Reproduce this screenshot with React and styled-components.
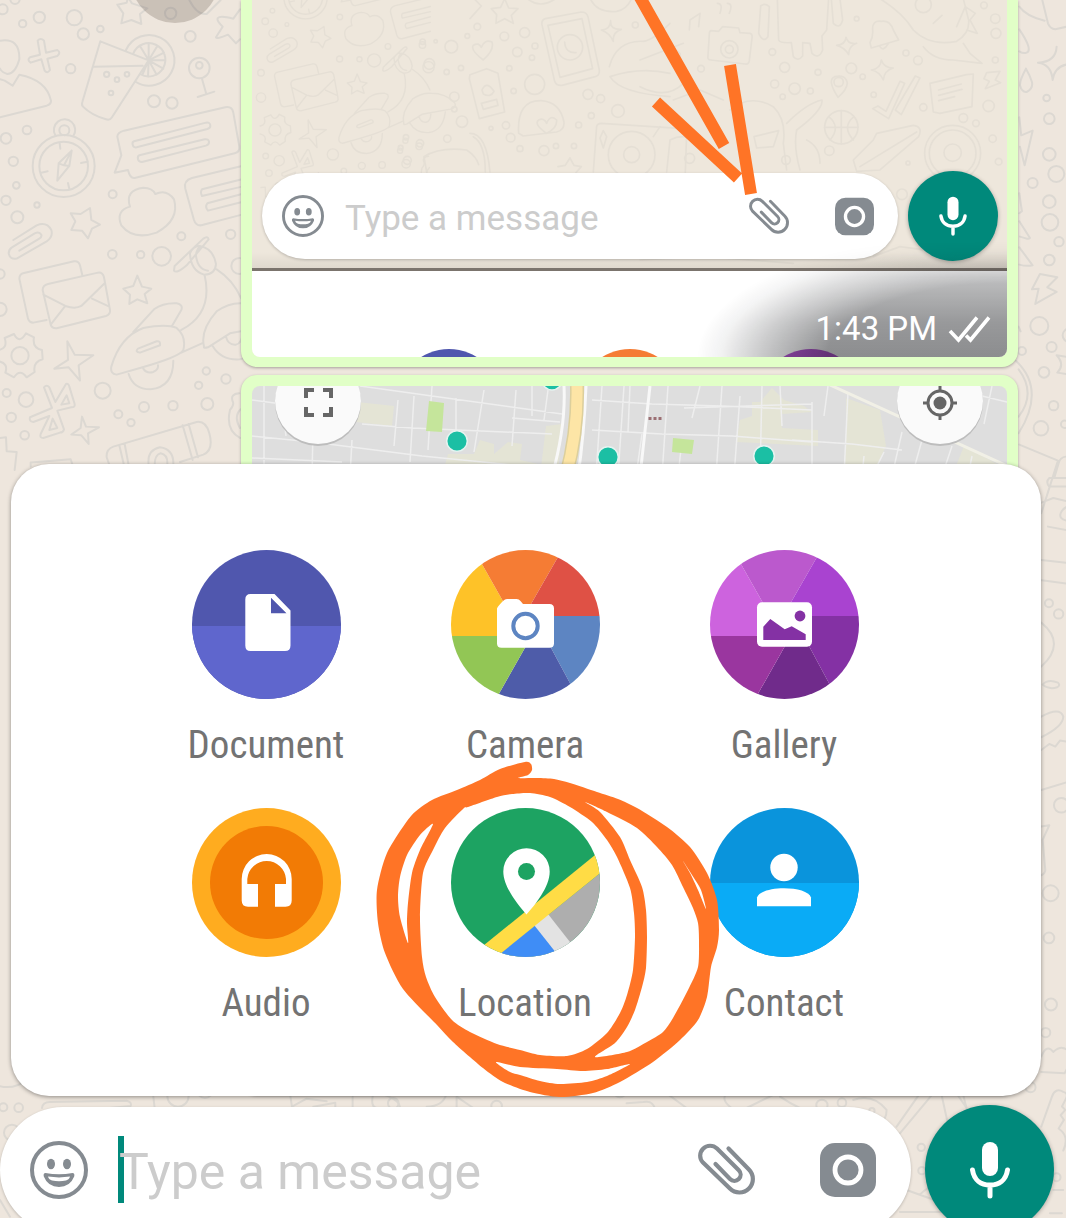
import styled, { createGlobalStyle } from 'styled-components';

const GlobalStyle = createGlobalStyle`
  * {
    box-sizing: border-box;
  }

  body {
    margin: 0;
    background: #eee6dd;
    font-family: Roboto, 'Liberation Sans', sans-serif;
  }
`;

const PageStyled = styled.main`
  position: relative;
  display: flex;
  flex-direction: column;
  height: 100vh;
  overflow: hidden;
  background: #eee6dd;
`;

const WallpaperStyled = styled.svg`
  position: absolute;
  top: 0;
  left: 0;
  width: 100%;
  height: 100%;
  fill: none;
  stroke: ${({ $faint }) => ($faint ? '#e5dfd5' : '#dcd8d2')};
  stroke-width: 6;
  stroke-linecap: round;
  stroke-linejoin: round;
`;

const ChatStyled = styled.div`
  position: relative;
  flex: 1;
  min-height: 0;
  display: flex;
  flex-direction: column;
  gap: 8px;
  padding: 0 48px 10px 241px;
`;

const BubbleStyled = styled.div`
  position: relative;
  padding: ${({ $continued }) => ($continued ? '0 11px 10px' : '11px')};
  border-radius: ${({ $continued }) => ($continued ? '0 0 16px 16px' : '16px')};
  background: #e1ffc7;
  box-shadow: 0 1px 3px rgba(0, 0, 0, 0.3);
  ${({ $grow }) => $grow && 'flex: 1; min-height: 0;'}
`;

const ForwardButton = styled.button`
  position: absolute;
  top: -65px;
  left: -110px;
  width: 88px;
  height: 88px;
  border: 0;
  border-radius: 50%;
  background: rgba(60, 45, 35, 0.2);
`;

const PhotoStyled = styled.div`
  position: relative;
  overflow: hidden;
  border-radius: 0 0 8px 8px;
  background: #eee7dc;

  .photo__chat {
    position: relative;
    padding: 171px 9px 7px 10px;
    border-bottom: 3px solid #7b746d;
    background: linear-gradient(#0000 94%, #00000010);
  }

  .photo__sheet {
    position: relative;
    display: flex;
    justify-content: center;
    gap: 77px;
    height: 86px;
    padding-top: 78px;
    overflow: hidden;
    background: #fff;
  }

  .photo__arrow {
    position: absolute;
    top: 0;
    left: 0;
  }
`;

const PhotoDot = styled.span`
  flex: none;
  width: 104px;
  height: 104px;
  border-radius: 50%;
  background: ${({ $color }) => $color};
`;

const TimeStyled = styled.div`
  position: absolute;
  right: 0;
  bottom: 0;
  width: 310px;
  height: 116px;
  display: flex;
  align-items: flex-end;
  justify-content: flex-end;
  gap: 11px;
  padding: 0 16px 8px 0;
  color: #fff;
  font-size: 33px;
  line-height: 40px;

  &::before {
    content: '';
    position: absolute;
    inset: 0;
    background: linear-gradient(
      to top,
      rgba(10, 12, 16, 0.47),
      rgba(10, 12, 16, 0.42) 30%,
      rgba(10, 12, 16, 0.26) 70%,
      rgba(10, 12, 16, 0)
    );
    mask-image: radial-gradient(
      ellipse 100% 110% at 100% 100%,
      #000 58%,
      rgba(0, 0, 0, 0.5) 78%,
      rgba(0, 0, 0, 0.12) 92%,
      transparent 100%
    );
  }

  time,
  svg {
    position: relative;
  }

  svg {
    margin-bottom: 6px;
  }
`;

const MapStyled = styled.div`
  height: 100%;
  overflow: hidden;
  border-radius: 8px;
  background: #dedede;
`;

const ComposerStyled = styled.form`
  position: relative;
  display: flex;
  align-items: center;
  gap: ${({ $small }) => ($small ? '10px' : '14px')};
  ${({ $small }) => !$small && 'margin-bottom: -16px; padding-right: 12px;'}

  .composer__pill {
    flex: 1;
    min-width: 0;
    display: flex;
    align-items: center;
    height: ${({ $small }) => ($small ? '86px' : '126px')};
    padding: ${({ $small }) => ($small ? '0 24px 0 20px' : '0 35px 0 30px')};
    border-radius: 64px;
    background: #fff;
    box-shadow: 0 1px 3px rgba(0, 0, 0, 0.22);
  }

  .composer__field {
    position: relative;
    flex: 1;
    min-width: 0;
    margin-left: ${({ $small }) => ($small ? '21px' : '30px')};
  }

  .composer__caret {
    position: absolute;
    top: 0;
    left: 0;
    width: 6px;
    height: 67px;
    background: #00897b;
  }

  input {
    position: relative;
    display: block;
    width: 100%;
    height: ${({ $small }) => ($small ? '44px' : '67px')};
    padding: ${({ $small }) => ($small ? '4px 0 0' : '4px 0 0 1px')};
    border: 0;
    outline: 0;
    background: transparent;
    font-family: inherit;
    font-size: ${({ $small }) => ($small ? '35px' : '50px')};
  }

  input::placeholder {
    color: #ccc;
    opacity: 1;
  }
`;

const IconButton = styled.button`
  flex: none;
  display: flex;
  padding: 0;
  border: 0;
  background: none;
  margin-left: ${({ $gap }) => $gap || 0}px;
`;

const MicButton = styled.button`
  flex: none;
  display: flex;
  align-items: center;
  justify-content: center;
  width: ${({ $small }) => ($small ? '90px' : '129px')};
  height: ${({ $small }) => ($small ? '90px' : '129px')};
  padding: 0;
  border: 0;
  border-radius: 50%;
  background: #00897b;
  box-shadow: 0 1px 4px rgba(0, 0, 0, 0.3);
`;

const DockStyled = styled.div`
  position: relative;
`;

const SheetStyled = styled.section`
  position: absolute;
  z-index: 1;
  left: 11px;
  right: 25px;
  bottom: calc(100% + 9px);
  height: 632px;
  padding: 86px 2px 0 0;
  border-radius: 38px;
  background: #fff;
  box-shadow: 0 1px 4px rgba(0, 0, 0, 0.4);

  .sheet__grid {
    display: grid;
    grid-template-columns: repeat(3, 259px);
    grid-auto-rows: 258px;
    justify-content: center;
  }

  .sheet__scribble {
    position: absolute;
    top: 291px;
    left: calc(50% - 156px);
    pointer-events: none;
  }
`;

const AttachButton = styled.button`
  display: flex;
  flex-direction: column;
  align-items: center;
  gap: 22px;
  padding: 0;
  border: 0;
  background: none;
  color: #737373;
  font-family: 'Roboto Condensed', 'Liberation Sans Narrow', Roboto, sans-serif;
  font-size: 39px;
  line-height: 48px;

  svg {
    display: block;
    border-radius: 50%;
  }
`;

const Circles = ({ items }) =>
  items.map(([x, y, r]) => <circle key={`${x}-${y}-${r}`} cx={x} cy={y} r={r} />);

const leftBubbles = [
  [8, 28, 15], [45, -2, 14], [68, 71, 11], [118, 52, 17], [223, 53, 23], [250, 102, 17],
  [301, 87, 10], [512, 40, 17], [571, 109, 16], [212, 206, 14], [462, 304, 18], [516, 309, 17],
  [81, 390, 13], [18, 415, 16], [40, 484, 14], [49, 556, 10], [18, 601, 14], [111, 615, 8],
  [52, 652, 18], [338, 583, 12], [544, 709, 12], [692, 703, 14], [337, 763, 13], [422, 764, 11],
  [485, 769, 28], [0, 822, 14], [0, 928, 20], [308, 1172, 24], [20, 1179, 12], [78, 1199, 22],
  [34, 1252, 14], [74, 1306, 13], [619, 1113, 11], [678, 1137, 14], [596, 1156, 11],
  [432, 1221, 15], [519, 1217, 14], [355, 1243, 12], [393, 1268, 11], [622, 1212, 18], [718, 798, 24],
];

const rightBubbles = [
  [1220, 294, 10], [1228, 356, 16], [1228, 463, 19], [1249, 522, 24], [1178, 549, 15],
  [1228, 605, 19], [1230, 667, 25], [1257, 725, 14], [1228, 780, 16], [1198, 978, 27],
  [1235, 1041, 15], [1146, 1053, 12], [1212, 1117, 16], [1241, 1217, 14], [1203, 1285, 22],
  [1274, 1273, 11], [1288, 1006, 20],
];

const LeftDoodles = () => (
  <g transform="scale(.3333)">
    <Circles items={leftBubbles} />
    {/* drink with a lemon slice */}
    <path d="M301 124L446 181L336 352Q330 362 318 358Q275 346 249 320Q244 315 247 306ZM282 200L428 197M378 150A76 76 0 1 1 408 246M400 160A50 50 0 1 1 420 222M446 181V130M446 181L420 138M446 181L472 138M446 181L492 158M446 181H496M446 181L490 206M446 181L470 224M446 181L444 230M446 181L428 222" />
    <circle cx="320" cy="223" r="8" />
    <circle cx="381" cy="223" r="7" />
    <circle cx="351" cy="239" r="7" />
    <circle cx="333" cy="279" r="7" />
    {/* pin */}
    <circle cx="598" cy="204" r="31" />
    <circle cx="598" cy="196" r="10" />
    <path d="M606 236L619 282M593 291L643 275" />
    {/* stars and crosses */}
    <path d="M384 -8L396 10L442 25L420 42L424 72L394 60L364 70L370 40L352 14L380 8Z" />
    <path d="M720 28L700 56Q660 46 654 54Q648 60 668 80L648 112Q650 118 684 104L708 130L720 118M566 -4Q590 46 620 42L662 0" />
    <path d="M113 122Q122 112 132 122L138 158L172 150Q184 158 172 168L142 176L150 210Q142 222 134 212L124 178L92 188Q80 180 90 172L120 164Z" />
    <path d="M0 122Q60 112 58 178Q46 222 22 222Q6 218 0 206M0 238L14 242L38 257L58 224Q140 240 153 302Q154 312 140 317L0 352" />
    {/* compass */}
    <circle cx="191" cy="498" r="93" />
    <circle cx="191" cy="498" r="73" />
    <circle cx="193" cy="391" r="15" />
    <path d="M166 406A32 32 0 1 1 220 408M179 430L181 446M204 549L208 567M124 518L143 514M243 489L262 485M215 452L208 498L172 542L176 490ZM176 490L192 496L208 498M192 496L215 452" />
    {/* speech notes */}
    <path d="M372 392L676 322Q696 318 700 338L718 440Q720 456 704 460L404 534Q390 536 384 510L344 518L364 466L352 410Q352 398 372 392ZM402 424L618 368Q630 366 631 376Q632 384 622 387L410 442Q400 444 398 434Q396 426 402 424ZM418 466L614 418Q626 416 627 426Q628 434 618 437L426 486Q416 486 414 478Q412 468 418 466Z" />
    <path d="M726 498L576 534Q550 542 556 566L582 660Q588 678 604 676L726 644M726 538L606 568Q600 576 606 588L726 560M726 582L622 610Q614 620 624 632L726 606" />
    <path d="M390 620Q374 570 430 563Q458 564 466 582Q500 566 522 598Q540 660 470 698Q400 722 364 676Q346 632 390 620Z" />
    <path d="M270 624L274 660L300 674L276 686L264 715L246 692L214 690L226 664L212 640L242 642Z" />
    <path d="M40 720L110 676Q140 664 154 690Q160 710 140 724L50 776Q30 780 26 760Q26 748 36 742L104 700Q118 694 124 704Q126 712 118 716L58 752" />
    {/* letters */}
    <path d="M140 960L100 968Q88 968 84 956L58 836Q58 822 72 819L222 784Q236 782 240 796L247 826M144 852L294 818Q308 816 312 832L330 930Q332 944 318 948L170 985Q156 986 152 974L128 870Q128 856 144 852ZM130 884L196 918Q226 928 244 918L314 850M152 974L196 918M328 920L276 896" />
    <path d="M412 827L426 860L454 866L434 882L442 910L412 898L388 912L390 884L370 866L400 858Z" />
    {/* scooter */}
    <path d="M524 798L610 716Q624 706 626 718L560 796Q530 822 522 812ZM570 760Q580 736 600 738Q640 746 648 792Q646 824 612 824Q572 812 570 760ZM588 768Q590 740 606 740M588 768Q594 810 624 812M614 826Q640 940 544 990M650 808Q700 840 724 896M400 996L462 928Q490 908 530 910Q550 914 544 930L516 978M334 1100Q360 1010 430 984Q500 970 530 984Q560 1010 550 1050Q540 1070 420 1104L350 1124Q330 1122 334 1100ZM414 1046L470 1024Q482 1022 480 1036L420 1058Q404 1056 414 1046ZM386 1122Q400 1168 452 1168Q520 1160 520 1082M430 1106Q440 1122 460 1116Q476 1108 474 1096M544 1058L606 1030M612 1040Q600 990 650 934Q690 906 730 910Q790 910 830 950Q840 970 812 978L690 1000L624 1042Q610 1046 612 1040ZM638 1038Q664 1082 720 1078Q780 1070 790 990M678 1010Q684 1036 708 1034Q726 1030 728 1000" />
    {/* gear */}
    <circle cx="60" cy="1067" r="26" />
    <path d="M42 1002Q58 1034 78 1000L102 1012Q96 1044 126 1050L128 1078Q98 1086 104 1116L80 1132Q60 1104 42 1132L16 1118Q26 1090 -4 1084M-4 1050Q24 1046 14 1014L42 1002" />
    <path d="M202 1024L224 1064L280 1066L236 1096L240 1142L206 1102L163 1106L204 1080Z" />
    <path d="M132 1162Q140 1152 148 1162L166 1206L198 1152Q206 1150 208 1160L224 1212Q226 1222 214 1222L172 1232L192 1288Q190 1298 180 1298L130 1314Q118 1314 122 1302L148 1248L100 1266Q86 1264 90 1252L156 1224ZM200 1186L208 1210L184 1214ZM158 1256L172 1284L148 1290Z" />
    <path d="M246 1250L258 1280L297 1282L264 1300L266 1332L244 1306L214 1304L242 1284Z" />
    <path d="M330 1400L320 1372Q318 1348 340 1340L590 1266Q618 1262 628 1300Q642 1350 610 1364L540 1386M548 1276L578 1380M566 1272L594 1372M358 1336L372 1396M374 1332L386 1396M446 1396Q440 1350 480 1342Q522 1348 520 1394M464 1396Q464 1364 482 1360Q504 1364 502 1394M92 1400V1388L212 1378L218 1396M0 1314L18 1312L20 1354L50 1356L44 1410M718 1180Q690 1182 698 1204Q704 1214 690 1230Q676 1290 720 1314M722 1228Q700 1250 720 1284" />
  </g>
);

const RightDoodles = () => (
  <g transform="translate(640 0) scale(.3333)">
    <Circles items={rightBubbles} />
    <path d="M1138 20Q1160 50 1214 62M1206 -4L1224 70Q1230 86 1246 88L1290 78M1138 88Q1180 150 1160 158Q1150 162 1138 154M1158 206Q1140 238 1140 256Q1146 278 1160 276Q1180 266 1176 246Q1170 226 1158 206M1250 140Q1248 186 1194 188Q1234 192 1238 240Q1244 196 1290 192M1138 352L1144 406L1178 392L1154 496L1140 440M1138 580L1146 634L1138 640M1138 664L1170 714Q1168 720 1140 710M1138 742L1178 796Q1160 800 1138 794M1200 822L1252 832L1222 862L1250 876L1186 912L1196 866L1176 868ZM1250 1066L1290 1072M1250 1066Q1276 1094 1252 1118L1290 1124M1136 980L1142 994M1136 1108Q1190 1180 1136 1250M1100 1060Q1230 1150 1136 1300" />
    <path d="M1138 1334L1254 1382L1204 1540M1278 1370Q1260 1372 1256 1390L1244 1430M1228 1434H1290M1228 1460H1290M1228 1434Q1216 1446 1228 1460M1204 1508L1240 1494L1290 1506M1224 1580L1290 1592M1204 1680L1290 1690M1280 1562Q1256 1556 1262 1540Q1266 1526 1290 1516M1200 1740L1290 1752M1204 1868Q1280 1930 1204 2000M1208 2054Q1224 2036 1254 2048Q1262 2056 1252 2062Q1226 2070 1208 2054ZM1204 2150Q1260 2120 1270 2150Q1270 2180 1204 2212M1204 2250L1228 2232L1246 2240L1260 2222L1290 2226M1204 2370L1290 2344M1204 2480L1228 2476L1208 2520L1216 2610Q1216 2620 1204 2626" />
    <Circles items={[[1227, 1810, 12], [1256, 1842, 14], [1264, 2416, 22], [1232, 2680, 24], [1227, 2814, 16], [1233, 3014, 18], [1217, 3098, 14]]} />
    <path d="M1204 3170Q1220 3130 1240 3156Q1270 3130 1290 3160M1204 3216L1274 3220L1290 3190M1204 3380L1236 3290Q1246 3262 1270 3276Q1288 3280 1276 3300L1266 3320L1276 3330L1262 3346L1272 3360L1256 3386Q1290 3410 1270 3452" />
  </g>
);

const BottomDoodles = () => (
  <g transform="translate(0 1080) scale(.3333)">
    <Circles items={[[10, 82, 12], [56, 83, 13], [36, 158, 24], [534, 48, 32], [615, 30, 24], [1180, 70, 16], [1490, 78, 16], [2466, 76, 17], [2526, 68, 13], [2764, 202, 11], [2766, 272, 11], [3092, 22, 15], [3170, 292, 12], [2900, 406, 14], [2616, 92, 8], [1860, 34, 18]]} />
    <path d="M126 84Q128 66 150 66L380 62Q396 66 392 78L200 96M-10 16Q40 32 80 0M0 360L30 410M460 50L464 84M870 40L876 80L920 56L980 64M940 80L1006 68V90M1058 50V84M1120 40Q1110 80 1130 84M1150 44Q1200 60 1200 84M1280 80Q1330 80 1340 40M1370 84V50L1420 84M1880 70L1930 66Q1960 60 1966 90M2000 40L2060 84M2240 84L2330 40M2180 40Q2160 60 2200 88M2340 50Q2370 70 2400 84M2560 60Q2620 40 2660 90Q2660 120 2640 126M2700 160L2800 40M2690 140L2760 40M2824 40L2848 150M2870 40L2900 84M2890 44Q2900 90 2910 110M2720 330L2820 366M2700 396H2860M2760 344Q2790 310 2830 320M3160 330H3190M3150 400L3186 400" />
  </g>
);

const ThumbDoodles = () => (
  <>
    <g transform="translate(9 -119) scale(.7)">
      <LeftDoodles />
    </g>
    <g transform="translate(-12 0) scale(.3333)" strokeWidth="5">
      <Circles
        items={[[548, 125, 8], [587, 124, 5], [634, 140, 19], [568, 192, 16], [620, 216, 8], [663, 204, 8], [712, 80, 10], [682, 108, 7], [793, 109, 13], [854, 98, 15], [832, 156, 14], [885, 138, 9], [876, 173, 8], [808, 205, 8], [821, 273, 8], [643, 290, 14], [643, 328, 8], [666, 365, 17], [753, 385, 6], [798, 376, 11], [812, 413, 13], [840, 446, 9], [912, 452, 15], [948, 438, 8], [1002, 438, 8], [1016, 375, 9], [1054, 347, 9], [1134, 333, 19], [1044, 283, 15], [1082, 296, 12], [498, 412, 8], [540, 430, 11], [622, 416, 11], [482, 443, 7], [502, 481, 12], [1186, 75, 9], [884, 253, 30], [990, 142, 38], [1175, 464, 70], [1175, 464, 24]]}
      />
      <path d="M690 56L724 18L700 -6M794 -4L806 24L834 26L814 46L820 70L794 56L768 70L770 44L754 26L782 22ZM730 180Q690 150 700 136Q716 126 724 142Q734 116 756 126Q764 150 730 180ZM916 56L1024 36Q1040 36 1044 50L1078 210Q1080 226 1066 230L966 256Q950 258 944 244L906 74Q904 60 916 56ZM924 76L1026 56L1058 206L960 232ZM974 126Q976 160 1008 158M690 224L740 206L774 220L794 336L718 356L688 236ZM726 270Q740 240 762 274Q752 294 730 282ZM724 310L770 298L774 316L730 328ZM836 400Q830 300 904 302Q960 306 972 366Q974 390 950 396L850 408ZM920 400Q880 372 896 360Q912 352 920 370Q932 342 950 360Q952 384 920 400ZM1112 62Q1110 90 1144 88Q1118 96 1120 124Q1108 98 1084 90Q1112 88 1112 62ZM1108 200Q1130 120 1210 124Q1240 120 1290 70M1110 230Q1200 200 1290 220M1110 230Q1140 280 1290 290M1060 516L1070 380Q1072 370 1084 370L1330 386Q1342 390 1340 402L1336 520M1090 392L1100 410L1090 444L1080 414ZM990 474L1002 496L1024 500L1008 518M990 474L976 496L954 500M552 470Q600 440 680 450Q710 470 716 494M552 470L560 516M690 400Q740 400 750 516M700 410Q736 430 736 516M1050 -6Q1070 40 1130 34Q1160 30 1176 -6M860 -6Q900 30 950 -6" />
    </g>
    <g transform="translate(388 0) scale(.3333)" strokeWidth="5">
      <Circles
        items={[[397, 156, 10], [434, 202, 15], [534, 217, 9], [404, 252, 12], [464, 266, 17], [511, 273, 9], [428, 290, 8], [634, 205, 16], [668, 230, 8], [596, 246, 14], [650, 56, 7], [701, 284, 8], [604, 382, 50], [568, 452, 14], [804, 489, 6], [850, 322, 11], [970, 354, 13], [1008, 370, 10], [1046, 318, 17], [1058, 416, 11], [1076, 485, 10], [1068, 100, 15], [1066, 56, 14], [1032, 16, 10], [798, 159, 9], [834, 181, 13], [938, 460, 84], [938, 458, 26], [938, 460, 70], [183, 206, 10], [149, 475, 15], [438, 480, 13], [786, 583, 16], [1066, 180, 9], [268, 148, 26], [268, 148, 12], [850, 14, 24]]}
      />
      <path d="M214 92L236 94L248 80L296 84L300 98L330 100Q338 102 336 114L328 182Q326 194 316 192L212 180Q202 180 204 168L208 102Q208 92 214 92ZM356 100L362 18Q374 8 388 20L384 110Q370 130 356 100ZM412 -4L416 120Q420 130 454 128L460 170Q474 186 488 168V128L510 130L516 160Q536 180 548 150L546 108L560 90L566 -6M574 -4L580 70Q600 90 608 60L600 -4M618 112Q624 134 650 130Q626 138 626 164Q614 142 590 136Q616 134 618 112ZM724 180Q732 204 760 204Q732 212 730 240Q718 214 694 210Q722 206 724 180ZM690 128Q700 110 698 90Q696 60 724 64Q750 60 760 90L776 120L694 144ZM720 140Q730 156 744 132M594 292Q560 240 584 230Q618 222 622 250Q620 270 594 292ZM698 326L714 318L738 334L780 244L794 250L746 356ZM766 330L826 228L840 234L784 344ZM870 250L980 224L1000 222L996 320L900 340L880 336ZM896 270L964 252M896 286L966 268M896 302L944 290M554 382H654M604 332V432M566 350Q604 380 570 420M642 350Q604 380 640 420M640 480L700 420L710 400L820 376Q850 380 836 410L720 510L650 514ZM660 500L830 396M720 -4Q790 40 820 90Q870 140 950 124Q990 100 986 60L970 -4M850 140Q880 180 940 180L1026 190L990 160L970 130M880 70L906 46M950 80L976 20L1006 40L990 60L1012 100L980 90M1040 218L1080 214L1066 240L1082 248L1036 266L1048 244L1032 236ZM270 330Q330 280 400 320Q440 360 430 430L440 510M440 370Q500 310 546 300Q550 330 470 390Q460 440 480 510M500 420Q540 440 540 490M342 410L416 392L400 440L350 444ZM150 60L180 40L176 80M150 60L148 90M232 10Q250 10 240 40M262 10Q280 10 268 40M0 260Q80 300 130 250L120 160L60 110M0 180L130 130M100 300L180 270L250 300M60 380L40 410M80 516L90 420Q130 400 160 420M0 780L200 770L460 790M700 770L780 740L1000 770" />
    </g>
  </>
);

const SmileyIcon = ({ size }) => (
  <svg width={size} height={size} viewBox="0 0 58 58" fill="#858b91">
    <circle cx="29" cy="29" r="27" fill="none" stroke="#858b91" strokeWidth="4" />
    <ellipse cx="21" cy="23" rx="4" ry="5.2" />
    <ellipse cx="37" cy="23" rx="4" ry="5.2" />
    <path d="M15.5 32Q29 34.4 42.500 32Q45 32 44.2 35.5Q40 46 29 46T13.8 35.5Q13 32 15.5 32Z" />
    <path d="M18 35.6Q29 37.2 40 35.6Q39.500 38.4 36 39.6Q29 41 22 39.6Q18.500 38.4 18 35.6Z" fill="#fff" />
  </svg>
);

const ClipIcon = ({ size }) => (
  <svg width={size} height={size} viewBox="0 -2 57 57" fill="none" stroke="#858b91" strokeWidth="4.2" strokeLinecap="round">
    <path d="M30.5 5.5L50.9 26.5A13.4 13.4 0 0 1 31.9 45.6L5 19.6A9.9 9.9 0 0 1 19 5.6L40.8 27.2A6.2 6.2 0 0 1 32 36L17.5 21" />
  </svg>
);

const LensIcon = ({ size }) => (
  <svg width={size} height={size} viewBox="0 0 56 56">
    <rect y="1" width="56" height="54" rx="15" fill="#858b91" />
    <circle cx="28" cy="28" r="13" fill="none" stroke="#fff" strokeWidth="4.8" />
  </svg>
);

const MicIcon = ({ size }) => (
  <svg width={size} height={size} viewBox="0 0 58 58" fill="none" stroke="#fff" strokeWidth="5" strokeLinecap="round">
    <rect x="21" y="1" width="16" height="34" rx="8" fill="#fff" stroke="none" />
    <path d="M11.5 29C13 39 20 44 29 44S45 39 46.5 29M29 44V55" />
  </svg>
);

const DocumentIcon = () => (
  <svg width="149" height="149" viewBox="0 0 149 149">
    <rect width="149" height="149" fill="#5057ae" />
    <rect y="76" width="149" height="73" fill="#5f66cd" />
    <path d="M58.5 44H82.5L98.5 60.5V95.5Q98.5 101 93 101H58.5Q53.3 101 53.3 95.5V49.5Q53.3 44 58.5 44ZM79 47.7V63.3H94.5Z" fill="#fff" fillRule="evenodd" />
  </svg>
);

const Wheel = ({ colors, children }) => (
  <svg width="149" height="149" viewBox="0 0 149 149">
    <path d="M0 86V0H23L53 53L74 74L46 86Z" fill={colors[0]} />
    <path d="M23 0H111L80 54L74 74L53 53Z" fill={colors[1]} />
    <path d="M111 0H149V66H100L74 74L80 54Z" fill={colors[2]} />
    <path d="M149 66V149H127.5L99 96L74 74L100 66Z" fill={colors[3]} />
    <path d="M127.5 149H45L75 96L74 74L99 96Z" fill={colors[4]} />
    <path d="M45 149H0V86H46L74 74L75 96Z" fill={colors[5]} />
    {children}
  </svg>
);

const CameraIcon = () => (
  <Wheel colors={['#fec228', '#f57c34', '#df5145', '#5d85c2', '#4e5ca9', '#92c655']}>
    <path d="M46 58.5Q47 56 52 51Q54 49 56 49H65.5Q68 49 69.5 51L72 54H98.5Q103 54 103 58.5V93.5Q103 97.7 98.5 97.7H50.5Q46 97.7 46 93.5Z" fill="#fff" />
    <circle cx="74.5" cy="76" r="12.2" fill="none" stroke="#5d85c2" strokeWidth="4" />
  </Wheel>
);

const GalleryIcon = () => (
  <Wheel colors={['#cd63de', '#bb59cd', '#a943d0', '#8431a4', '#702b8b', '#9a369f']}>
    <rect x="47" y="52.3" width="55" height="44.5" rx="5" fill="#fff" />
    <path d="M53.3 76.7L60.3 69L74.7 79.3L81.7 76.3L95.7 84.3V90H53.3Z" fill="#8431a4" />
    <circle cx="90" cy="66" r="5.4" fill="#8431a4" />
  </Wheel>
);

const AudioIcon = () => (
  <svg width="149" height="149" viewBox="0 0 149 149">
    <rect width="149" height="149" fill="#ffac1f" />
    <circle cx="74.5" cy="74.5" r="56.5" fill="#f27b05" />
    <path d="M49.7 71A25 25 0 0 1 99.7 71V92.5Q99.7 98.7 93.5 98.7H83V76H94V71A19.4 19.4 0 0 0 55.3 71V76H66V98.7H56Q49.7 98.7 49.7 92.5Z" fill="#fff" />
  </svg>
);

const LocationIcon = () => (
  <svg width="149" height="149" viewBox="0 0 149 149">
    <rect width="149" height="149" fill="#1da362" />
    <path d="M40 153L158 58V153Z" fill="#aeaeae" />
    <path d="M40 153L84 117L110 151Z" fill="#3f8df6" />
    <path d="M83 117L97 106L126 143L110 151Z" fill="#e3e3e3" />
    <path d="M22 146L154 39L160 56.5L40 153.3Z" fill="#ffdc45" />
    <path d="M75.5 40.3A23.2 23.2 0 0 1 98.7 63.5C98.7 79 84 97 75.5 106.5C67 97 52.3 79 52.3 63.5A23.2 23.2 0 0 1 75.5 40.3Z" fill="#fff" />
    <circle cx="75.5" cy="63.5" r="8.5" fill="#1da362" />
  </svg>
);

const ContactIcon = () => (
  <svg width="149" height="149" viewBox="0 0 149 149">
    <rect width="149" height="149" fill="#0a94dc" />
    <rect y="75" width="149" height="74" fill="#0aabf6" />
    <circle cx="74" cy="59.5" r="13.7" fill="#fff" />
    <path d="M47 98.3V89.5C49 83.5 61 80.3 74 80.3S99 83.5 101 89.5V98.3Z" fill="#fff" />
  </svg>
);

// Closed smooth curve through every point
const smooth = (points) => {
  const n = points.length;
  const at = (i) => points[(i + n) % n];
  const parts = points.map((p, i) => {
    const prev = at(i - 1);
    const next = at(i + 1);
    const after = at(i + 2);
    const c1 = [p[0] + (next[0] - prev[0]) / 8, p[1] + (next[1] - prev[1]) / 8];
    const c2 = [next[0] - (after[0] - p[0]) / 8, next[1] - (after[1] - p[1]) / 8];
    return `C${c1} ${c2} ${next}`;
  });
  return `M${points[0]}${parts.join('')}Z`;
};

// Outer edge of the pen stroke first, then the gaps between its loops
const scribble = [
  [[525, 762], [531, 764], [532, 770], [528, 775], [518, 778], [537, 778], [554, 779], [570, 783], [597, 792], [618, 799], [637, 808], [667, 827], [690, 847], [707, 873], [717, 900], [719, 930], [717, 947], [711, 967], [707, 997], [698, 1020], [680, 1040], [653, 1062], [620, 1082], [593, 1093], [560, 1097], [530, 1092], [503, 1082], [483, 1068], [453, 1042], [437, 1025], [403, 989], [385, 953], [378, 923], [377, 890], [387, 853], [411, 816], [432, 800], [457, 790], [480, 780], [500, 769]],
  [[530, 793], [512, 794], [497, 797], [468, 807], [464, 808], [445, 828], [433, 850], [423, 873], [420, 917], [422, 957], [426, 977], [435, 997], [452, 1020], [470, 1032], [497, 1044], [520, 1050], [540, 1055], [567, 1056], [587, 1049], [607, 1033], [620, 1013], [627, 995], [633, 970], [635, 937], [634, 913], [630, 888], [617, 857], [607, 840], [592, 822], [570, 807], [550, 797]],
  [[585, 802], [600, 812], [620, 837], [630, 860], [642, 887], [646, 910], [647, 937], [646, 968], [642, 987], [635, 1010], [627, 1027], [615, 1043], [595, 1057], [627, 1052], [647, 1042], [663, 1032], [673, 1018], [688, 990], [698, 967], [699, 940], [698, 923], [693, 908], [683, 887], [672, 865], [657, 847], [637, 828], [607, 812]],
  [[683, 861], [692, 875], [701, 890], [706, 909], [698, 890], [690, 873]],
  [[433, 824], [420, 850], [412, 873], [408, 903], [407, 923], [408, 943], [400, 917], [398, 897], [400, 877], [407, 855], [420, 835]],
  [[496, 1062], [510, 1072], [520, 1075], [540, 1081], [560, 1084], [587, 1082], [607, 1076], [630, 1064], [607, 1069], [583, 1071], [557, 1069], [520, 1067]],
];

const attachments = [
  { name: 'Document', Icon: DocumentIcon },
  { name: 'Camera', Icon: CameraIcon },
  { name: 'Gallery', Icon: GalleryIcon },
  { name: 'Audio', Icon: AudioIcon },
  { name: 'Location', Icon: LocationIcon },
  { name: 'Contact', Icon: ContactIcon },
];

const Composer = ({ small }) => (
  <ComposerStyled $small={small} onSubmit={(e) => e.preventDefault()}>
    <div className="composer__pill">
      <IconButton type="button" aria-label="Emoji">
        <SmileyIcon size={small ? 42 : 58} />
      </IconButton>
      <div className="composer__field">
        {!small && <span className="composer__caret" />}
        <input type="text" placeholder="Type a message" aria-label="Type a message" />
      </div>
      <IconButton type="button" aria-label="Attach">
        <ClipIcon size={small ? 40 : 57} />
      </IconButton>
      <IconButton type="button" aria-label="Take a photo" $gap={small ? 46 : 65}>
        <LensIcon size={small ? 39 : 56} />
      </IconButton>
    </div>
    <MicButton type="button" aria-label="Voice message" $small={small}>
      <MicIcon size={small ? 40 : 58} />
    </MicButton>
  </ComposerStyled>
);

const Photo = () => (
  <PhotoStyled>
    <WallpaperStyled $faint aria-hidden="true">
      <ThumbDoodles />
    </WallpaperStyled>
    <div className="photo__chat">
      <Composer small />
    </div>
    <div className="photo__sheet">
      <PhotoDot $color="#5057ae" />
      <PhotoDot $color="linear-gradient(100deg, #f57c34 72%, #df5145 72%)" />
      <PhotoDot $color="#b254cf" />
    </div>
    <svg className="photo__arrow" width="755" height="200" stroke="#ff7426" strokeWidth="12">
      <path d="M385 -8L472 146M404 102L486 178M478 65L499 194" />
    </svg>
    <TimeStyled>
      <time>1:43 PM</time>
      <svg width="43" height="28" viewBox="0 0 43 28" fill="none" stroke="#fff" strokeWidth="3.6">
        <path d="M2 16L10.5 25L29 2.5M18 20.5L22.5 25L41 2.5" />
      </svg>
    </TimeStyled>
  </PhotoStyled>
);

const MapPicture = () => (
  <MapStyled>
    <svg width="755" height="90" viewBox="0 0 755 90">
      <path d="M105 16L142 20L140 40L104 36ZM190 90L196 68H222L228 54L242 58V68L256 56L270 58L268 74L286 78V90ZM294 40L310 38L306 90H288ZM508 16L520 2L532 14L552 20L560 26L530 28V42L566 44V60L484 56L488 34L500 30V16ZM594 12L628 24L634 60L620 90H590L594 60ZM712 60L745 78L755 90H700Z" fill="#e4e4d5" />
      <g fill="none" stroke="#eeeeee" strokeWidth="1.5">
        <path d="M0 14L30 18M12 0V90M28 0L34 50M0 50L60 56L170 70L310 84M0 72L90 76M62 0L60 90M100 54L98 90M108 0L180 10L310 28M146 14L142 60M162 10L158 76M110 38L160 42L300 48M180 0L176 64M204 12V60M232 4L222 66M264 4L260 60M280 0V30M296 4L292 34M260 32L308 36M340 14L400 18L470 20L560 24M350 0L344 90M372 0L366 90M340 44L410 48L480 50L560 56M378 0L376 46M390 48L384 90M416 0L410 90M430 54L426 90M432 22L560 18M448 0L440 32M470 0L464 90M488 10L482 90M510 0L508 90M528 0L530 40M560 16V90M540 54L600 58L650 64M576 0L572 30M596 6L592 90M612 70L610 90M632 66L620 90M650 46L640 90M670 54L660 90M700 60L690 90M720 70L716 90M730 10L755 16M740 0L732 38" />
      </g>
      <path d="M312 0Q314 40 300 90M334 0Q332 50 326 90M398 0L388 90" fill="none" stroke="#f8f8f8" strokeWidth="3" />
      <path d="M576 -2L755 80" fill="none" stroke="#f1f0e6" strokeWidth="3" />
      <path d="M325 0Q326 45 314 90" fill="none" stroke="#dccf9c" strokeWidth="14" />
      <path d="M325 0Q326 45 314 90" fill="none" stroke="#fde5a6" strokeWidth="11" />
      <path d="M177 15L192 17L190 46L174 45ZM421 52L442 54L440 68L420 66Z" fill="#c5e59b" />
      <path d="M398 31V34M403 31V34M408 31V34" stroke="#9b6f73" strokeWidth="3" />
      <g fill="#1bbfa4" stroke="#e5f3f0" strokeWidth="1.5">
        <circle cx="300" cy="-6" r="10" />
        <circle cx="205" cy="55" r="10.3" />
        <circle cx="356" cy="71" r="10.3" />
        <circle cx="512" cy="70" r="10.3" />
      </g>
      <circle cx="66" cy="17" r="43" fill="#bdbdbd" />
      <circle cx="688" cy="17" r="43" fill="#bdbdbd" />
      <circle cx="66" cy="15" r="43" fill="#fafafa" />
      <circle cx="688" cy="15" r="43" fill="#fafafa" />
      <path d="M54 12V4H62M71 4H79V12M79 21V29H71M62 29H54V21" fill="none" stroke="#666" strokeWidth="4" />
      <g fill="none" stroke="#666" strokeWidth="3">
        <circle cx="688" cy="17" r="12" />
        <circle cx="688" cy="17" r="6.5" fill="#666" stroke="none" />
        <path d="M688 0V6M688 28V34M671 17H677M699 17H705" />
      </g>
    </svg>
  </MapStyled>
);

const AttachSheet = () => (
  <SheetStyled aria-label="Attach">
    <div className="sheet__grid">
      {attachments.map(({ name, Icon }) => (
        <AttachButton key={name} type="button">
          <Icon />
          {name}
        </AttachButton>
      ))}
    </div>
    <svg className="sheet__scribble" width="360" height="350" viewBox="370 755 360 350">
      <path d={scribble.map(smooth).join('')} fill="#ff7426" fillRule="evenodd" />
    </svg>
  </SheetStyled>
);

export default function App() {
  return (
    <PageStyled>
      <GlobalStyle />
      <WallpaperStyled aria-hidden="true">
        <LeftDoodles />
        <RightDoodles />
        <BottomDoodles />
      </WallpaperStyled>
      <ChatStyled>
        <BubbleStyled $continued>
          <ForwardButton type="button" aria-label="Forward" />
          <Photo />
        </BubbleStyled>
        <BubbleStyled $grow>
          <MapPicture />
        </BubbleStyled>
      </ChatStyled>
      <DockStyled>
        <AttachSheet />
        <Composer />
      </DockStyled>
    </PageStyled>
  );
}
